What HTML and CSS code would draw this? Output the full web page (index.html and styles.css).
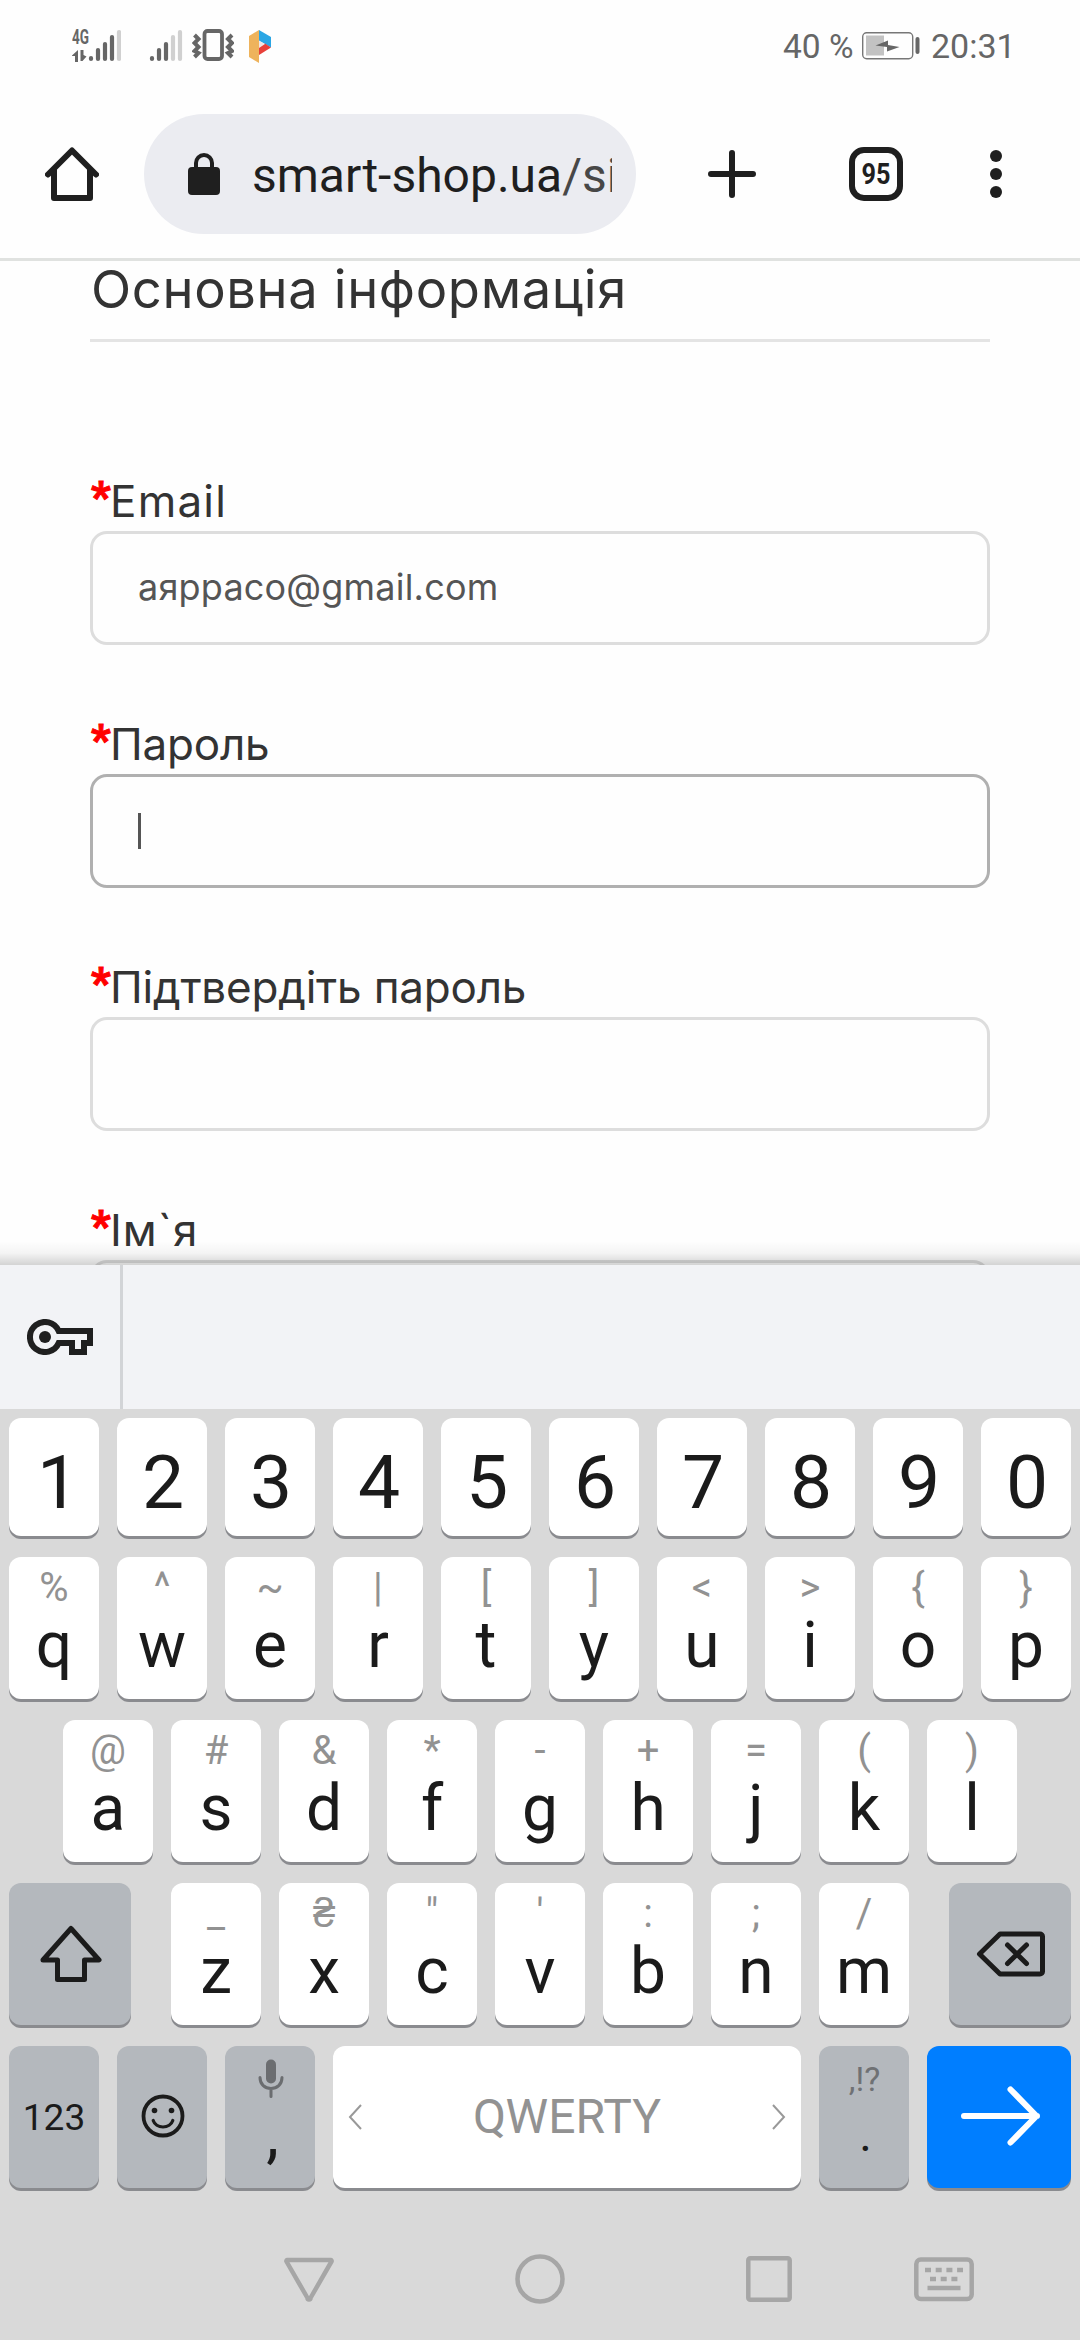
FILE: index.html
```html
<!DOCTYPE html>
<html lang="uk">
<head>
<meta charset="utf-8">
<title>smart-shop.ua</title>
<link rel="stylesheet" href="styles.css">
</head>
<body>
<div class="status">
  <svg class="signal" width="49" height="34" viewBox="72 28 49 34">
    <text class="net" x="72" y="44" textLength="17" lengthAdjust="spacingAndGlyphs">4G</text>
    <path d="M78 50v12h-3v-6h-3.500zM80.500 50h3v5l3 1.500-4 4.500h-2z" fill="#666"/>
    <g stroke="#666" stroke-width="4.200" stroke-linecap="round"><path d="M91 58v1M98 50v9M105 44v15M112 37v22"/><path d="M119 32v27" stroke="#d0d0d0"/></g>
  </svg>
  <svg class="signal-2" width="34" height="34" viewBox="149 28 34 34">
    <g stroke="#666" stroke-width="4.200" stroke-linecap="round"><path d="M152 58v1M159 50v9M166 44v15"/><path d="M173 37v22M180 32v27" stroke="#d0d0d0"/></g>
  </svg>
  <svg class="vibrate" width="42" height="34" viewBox="192 28 42 34" fill="none" stroke="#666">
    <rect x="204.500" y="31" width="17.500" height="28" rx="3" stroke-width="3.800"/>
    <path d="M194.500 35l4 4-4 4 4 4-4 4 4 2-4 4M232 35l-4 4 4 4-4 4 4 4-4 2 4 4" stroke-width="4"/>
  </svg>
  <svg class="logo" width="22" height="34" viewBox="249 29 22 34">
    <path d="M249 36l10-6v33l-10-6z" fill="#eeb35c"/>
    <path d="M259 30l12 7v10.500l-12-7z" fill="#2ba6e4"/>
    <path d="M265 43.500l6 4-12 7.500v-8z" fill="#e8403a"/>
    <path d="M259 41l6 3-6 4z" fill="#f3e5e2"/>
  </svg>
  <span class="percent">40 %</span>
  <svg class="battery" width="58" height="29" viewBox="862 31 58 29">
    <rect x="862.700" y="32.700" width="50" height="26" rx="4" fill="none" stroke="#777" stroke-width="1.400"/>
    <path d="M866 35.500h18v20h-18z" fill="#c2c2c2"/>
    <path d="M875.500 45.500l12.500-5v4.500l11.500 2-12.500 4.500v-4.500z" fill="#666"/>
    <rect x="915.500" y="37" width="4" height="17" rx="2" fill="#666"/>
  </svg>
  <span class="time">20:31</span>
</div>

<div class="toolbar">
  <svg class="home" width="54" height="54" fill="none" stroke="#1f1f1f" stroke-width="6" stroke-linecap="round" stroke-linejoin="round"><path d="M3 27.500L27 3.500l24 24M9 23v28h36V23"/></svg>
  <div class="url">
    <svg width="32" height="42"><rect y="14" width="32" height="28" rx="4" fill="#1f1f1f"/><path d="M8 15v-5a8 8 0 0 1 16 0v5" fill="none" stroke="#1f1f1f" stroke-width="4"/></svg>
    <div class="address">smart-shop.ua<span>/si</span></div>
  </div>
  <svg class="plus" width="48" height="48" stroke="#1f1f1f" stroke-width="6" stroke-linecap="round"><path d="M24 3v42M3 24h42"/></svg>
  <svg class="tabs" width="54" height="54"><rect x="3" y="3" width="48" height="48" rx="12" fill="none" stroke="#1f1f1f" stroke-width="6"/><text x="12.500" y="37" textLength="29" lengthAdjust="spacingAndGlyphs">95</text></svg>
  <svg class="more" width="12" height="48" fill="#1f1f1f"><circle cx="6" cy="6" r="6"/><circle cx="6" cy="24" r="6"/><circle cx="6" cy="42" r="6"/></svg>
</div>

<main class="page">
  <h1>Основна інформація</h1>
  <div class="field"><label class="latin"><b>*</b>Email</label><div class="box">аяррасо@gmail.com</div></div>
  <div class="field"><label><b>*</b>Пароль</label><div class="box focus"><i class="caret"></i></div></div>
  <div class="field"><label><b>*</b>Підтвердіть пароль</label><div class="box"></div></div>
  <div class="field"><label class="name"><b>*</b>Ім`я</label><div class="box"></div></div>
  <div class="shade"></div>
</main>

<div class="autofill">
  <div class="key-cell">
    <svg width="66" height="36" viewBox="27 1319 66 36"><path d="M58.700 1331H90v12h-6v9H72v-9H58.700a15 15 0 1 1 0-12z" fill="none" stroke="#1f1f1f" stroke-width="6"/><circle cx="45" cy="1337" r="6" fill="#1f1f1f"/></svg>
  </div>
</div>

<div class="keyboard">
  <div class="row digits">
    <div class="key one">1</div><div class="key">2</div><div class="key">3</div><div class="key">4</div><div class="key">5</div><div class="key">6</div><div class="key">7</div><div class="key">8</div><div class="key">9</div><div class="key">0</div>
  </div>
  <div class="row">
    <div class="key"><small>%</small>q</div><div class="key"><small>^</small>w</div><div class="key"><small>~</small>e</div><div class="key"><small>|</small>r</div><div class="key"><small>[</small>t</div><div class="key"><small>]</small>y</div><div class="key"><small>&lt;</small>u</div><div class="key"><small>&gt;</small>i</div><div class="key"><small>{</small>o</div><div class="key"><small>}</small>p</div>
  </div>
  <div class="row">
    <div class="key"><small>@</small>a</div><div class="key"><small>#</small>s</div><div class="key"><small>&amp;</small>d</div><div class="key"><small>*</small>f</div><div class="key"><small>-</small>g</div><div class="key"><small>+</small>h</div><div class="key"><small>=</small>j</div><div class="key"><small>(</small>k</div><div class="key"><small>)</small>l</div>
  </div>
  <div class="row spread">
    <div class="key fn wide"><svg width="62" height="58" viewBox="40 1924 62 58" fill="none" stroke="#1b1b1b" stroke-width="5" stroke-linejoin="round"><path d="M71 1927.500l28 31.500H84.500v19.500h-27V1959H43z"/></svg></div>
    <div class="row">
      <div class="key"><small>_</small>z</div><div class="key"><small>₴</small>x</div><div class="key"><small>"</small>c</div><div class="key"><small>'</small>v</div><div class="key"><small>:</small>b</div><div class="key"><small>;</small>n</div><div class="key"><small>/</small>m</div>
    </div>
    <div class="key fn wide del"><svg width="70" height="46" viewBox="976 1930 70 46" fill="none" stroke="#1b1b1b" stroke-width="5" stroke-linejoin="round" stroke-linecap="round"><path d="M979.500 1953l20.500-20h40a2.500 2.500 0 0 1 2.500 2.500v35a2.500 2.500 0 0 1-2.500 2.500h-40zM1007.500 1944l19 18.500M1026.500 1944l-19 18.500"/></svg></div>
  </div>
  <div class="row">
    <div class="key fn num">123</div>
    <div class="key fn center"><svg width="44" height="44" viewBox="-22 -22 44 44"><circle r="19.500" fill="none" stroke="#1b1b1b" stroke-width="3.800"/><circle cx="-8.500" cy="-5.500" r="2.800" fill="#1b1b1b"/><circle cx="8.500" cy="-5.500" r="2.800" fill="#1b1b1b"/><path d="M-9.800 4.500a10.200 9 0 0 0 19.600 0" fill="none" stroke="#1b1b1b" stroke-width="3.200" stroke-linecap="round"/></svg></div>
    <div class="key fn comma"><small><svg width="26" height="40" viewBox="258 2059 26 40"><rect x="266" y="2059.500" width="10" height="24" rx="5" fill="#6b6d70"/><path d="M260 2077.500c0 7 5 11 11 11s11-4 11-11M271 2089v7.500" fill="none" stroke="#6b6d70" stroke-width="3" stroke-linecap="round"/></svg></small>,</div>
    <div class="key space">
      <svg width="14" height="26" fill="none" stroke="#999" stroke-width="2"><path d="M13 1L2 13l11 12"/></svg>
      <span>QWERTY</span>
      <svg width="14" height="26" fill="none" stroke="#999" stroke-width="2"><path d="M1 1l11 12L1 25"/></svg>
    </div>
    <div class="key fn dot"><small>,!?</small>.</div>
    <div class="key enter"><svg width="80" height="62" viewBox="960 2085 80 62" fill="none" stroke="#fff" stroke-width="6" stroke-linecap="round" stroke-linejoin="round"><path d="M964 2116h73M1010.500 2089.500L1036.500 2116l-26 26.500"/></svg></div>
  </div>
</div>

<div class="nav">
  <svg width="50" height="50" viewBox="284 2254 50 50"><path d="M287.500 2260h43a1 1 0 0 1 1 1.500l-21 36.500a1.500 1.500 0 0 1-3 0l-21-36.500a1 1 0 0 1 1-1.500z"/></svg>
  <svg width="50" height="50"><circle cx="25" cy="25" r="22.500"/></svg>
  <svg width="46" height="50"><rect x="2.300" y="4.300" width="41.400" height="41.400" rx="2"/></svg>
  <svg width="60" height="50" viewBox="914 2254 60 50"><rect x="916.300" y="2259.500" width="55.400" height="39.500" rx="4.500"/><path d="M925 2270h38" stroke-dasharray="6 4.700"/><path d="M930 2279h28" stroke-dasharray="6 4.700"/><path d="M927.500 2288h33"/></svg>
</div>
</body>
</html>
```
FILE: styles.css
```css
* { box-sizing: border-box; }
body {
  margin: 0;
  width: 1080px;
  height: 2340px;
  overflow: hidden;
  background: #fefefe;
  font-family: Roboto, sans-serif;
}
svg { display: block; flex: none; }

.status {
  display: flex;
  align-items: center;
  height: 93px;
  padding-left: 72px;
  font-size: 34px;
  line-height: 93px;
  color: #666;
  white-space: nowrap;
}
.status svg { margin-bottom: 3px; }
.net { font: 700 20px Roboto, sans-serif; fill: #666; }
.signal-2 { margin-left: 28px; }
.vibrate { margin-left: 9px; }
.status .logo { margin: 0 0 2px 15px; }
.percent { margin-left: 512px; width: 80px; font-size: 33.5px; }
.battery { margin-left: -1px; }
.time { margin-left: 11px; }

.toolbar {
  display: flex;
  align-items: center;
  height: 168px;
  padding: 0 0 3px 45px;
  border-bottom: 3px solid #e0e2e0;
}
.url {
  display: flex;
  align-items: center;
  width: 492px;
  height: 120px;
  margin-left: 45px;
  padding: 0 24px 0 44px;
  border-radius: 60px;
  background: #ebecf1;
}
.address {
  flex: 1;
  margin-left: 32px;
  padding-top: 3px;
  overflow: hidden;
  font-size: 48px;
  line-height: 60px;
  color: #1f1f1f;
  white-space: nowrap;
}
.address span { color: #474747; }
.plus { margin-left: 72px; }
.tabs { margin-left: 93px; }
.tabs text { font: 700 29px Roboto, sans-serif; fill: #1f1f1f; }
.more { margin-left: 87px; }

.page {
  position: relative;
  height: 1004px;
  padding: 0 90px;
  overflow: hidden;
  font-family: Inter, sans-serif;
  color: #333;
}
h1 {
  height: 81px;
  margin: 0 0 129px;
  padding-left: 1px;
  border-bottom: 3px solid #e4e4e4;
  font-size: 52.5px;
  font-weight: 380;
  line-height: 56px;
  letter-spacing: 0.65px;
}
.field { margin-bottom: 69px; }
label {
  display: block;
  height: 60px;
  padding-left: 2px;
  font-size: 44px;
  font-weight: 380;
  line-height: 60px;
  letter-spacing: -0.2px;
}
label.latin { letter-spacing: 1.2px; }
label.name { letter-spacing: 1px; }
label b {
  display: inline-block;
  width: 18px;
  margin-left: -1px;
  margin-right: 1px;
  font: 900 42px/0 Roboto, sans-serif;
  letter-spacing: 0;
  vertical-align: 6px;
  color: #f00;
  -webkit-text-stroke: 1px #f00;
}
.box {
  display: flex;
  align-items: center;
  height: 114px;
  padding: 0 45px 3px;
  border: 3px solid #ddd;
  border-radius: 17px;
  font-size: 36px;
  letter-spacing: 0.2px;
  color: #555;
}
.box.focus { padding-bottom: 0; border-color: #b0b0b0; }
.caret { width: 3px; height: 36px; background: #555; }
.shade {
  position: absolute;
  left: 0;
  right: 0;
  bottom: 0;
  height: 24px;
  background: linear-gradient(rgba(0, 0, 0, 0), rgba(0, 0, 0, 0.04) 50%, rgba(0, 0, 0, 0.17));
}

.autofill { height: 144px; background: #f2f3f6; }
.key-cell {
  display: flex;
  align-items: center;
  width: 123px;
  height: 144px;
  padding-left: 27px;
  border-right: 3px solid #d2d4d7;
}

.keyboard {
  display: flex;
  flex-direction: column;
  gap: 18px;
  height: 782px;
  padding: 9px;
  background: #d9d9d9;
}
.row { display: flex; justify-content: center; gap: 18px; }
.row.spread { justify-content: space-between; }
.key {
  width: 90px;
  height: 142px;
  margin-bottom: 3px;
  border-radius: 12px;
  background: #fff;
  box-shadow: 0 3px #8a8b8f;
  font-size: 64px;
  line-height: 58px;
  text-align: center;
  color: #1b1b1b;
}
.key small {
  display: block;
  height: 60px;
  font-size: 40px;
  line-height: 62px;
  color: #929292;
}
.digits .key {
  height: 118px;
  padding-left: 2px;
  font-size: 75px;
  line-height: 129px;
}
.digits .key.one { padding-left: 8px; }
.key.fn { background: #b4b8bd; }
.key.wide {
  display: flex;
  align-items: center;
  width: 122px;
  padding-left: 31px;
}
.key.del { padding-left: 27px; }
.key.num { font-size: 37px; line-height: 143px; }
.key.center { display: flex; align-items: center; justify-content: center; padding: 0 0 2px 2px; }
.key.comma { padding-left: 5px; }
.comma small { padding: 13px 0 0 28px; }
.key.dot { padding-left: 3px; font-size: 48px; }
.dot small { padding-right: 2px; font-size: 34px; line-height: 66px; color: #6f7174; }
.key.space {
  display: flex;
  align-items: center;
  justify-content: space-between;
  width: 468px;
  padding: 0 15px;
  font-size: 48px;
  color: #929292;
}
.key.enter {
  display: flex;
  align-items: center;
  width: 144px;
  padding: 0 0 2px 33px;
  background: #007eff;
}

.nav {
  display: flex;
  align-items: center;
  height: 149px;
  padding: 27px 0 0 284px;
  background: #d9d9d9;
}
.nav svg { fill: none; stroke: #a6a6a6; stroke-width: 4.5px; }
.nav svg:nth-child(2),
.nav svg:nth-child(3) { margin-left: 181px; }
.nav svg:nth-child(4) { margin-left: 122px; }
```
